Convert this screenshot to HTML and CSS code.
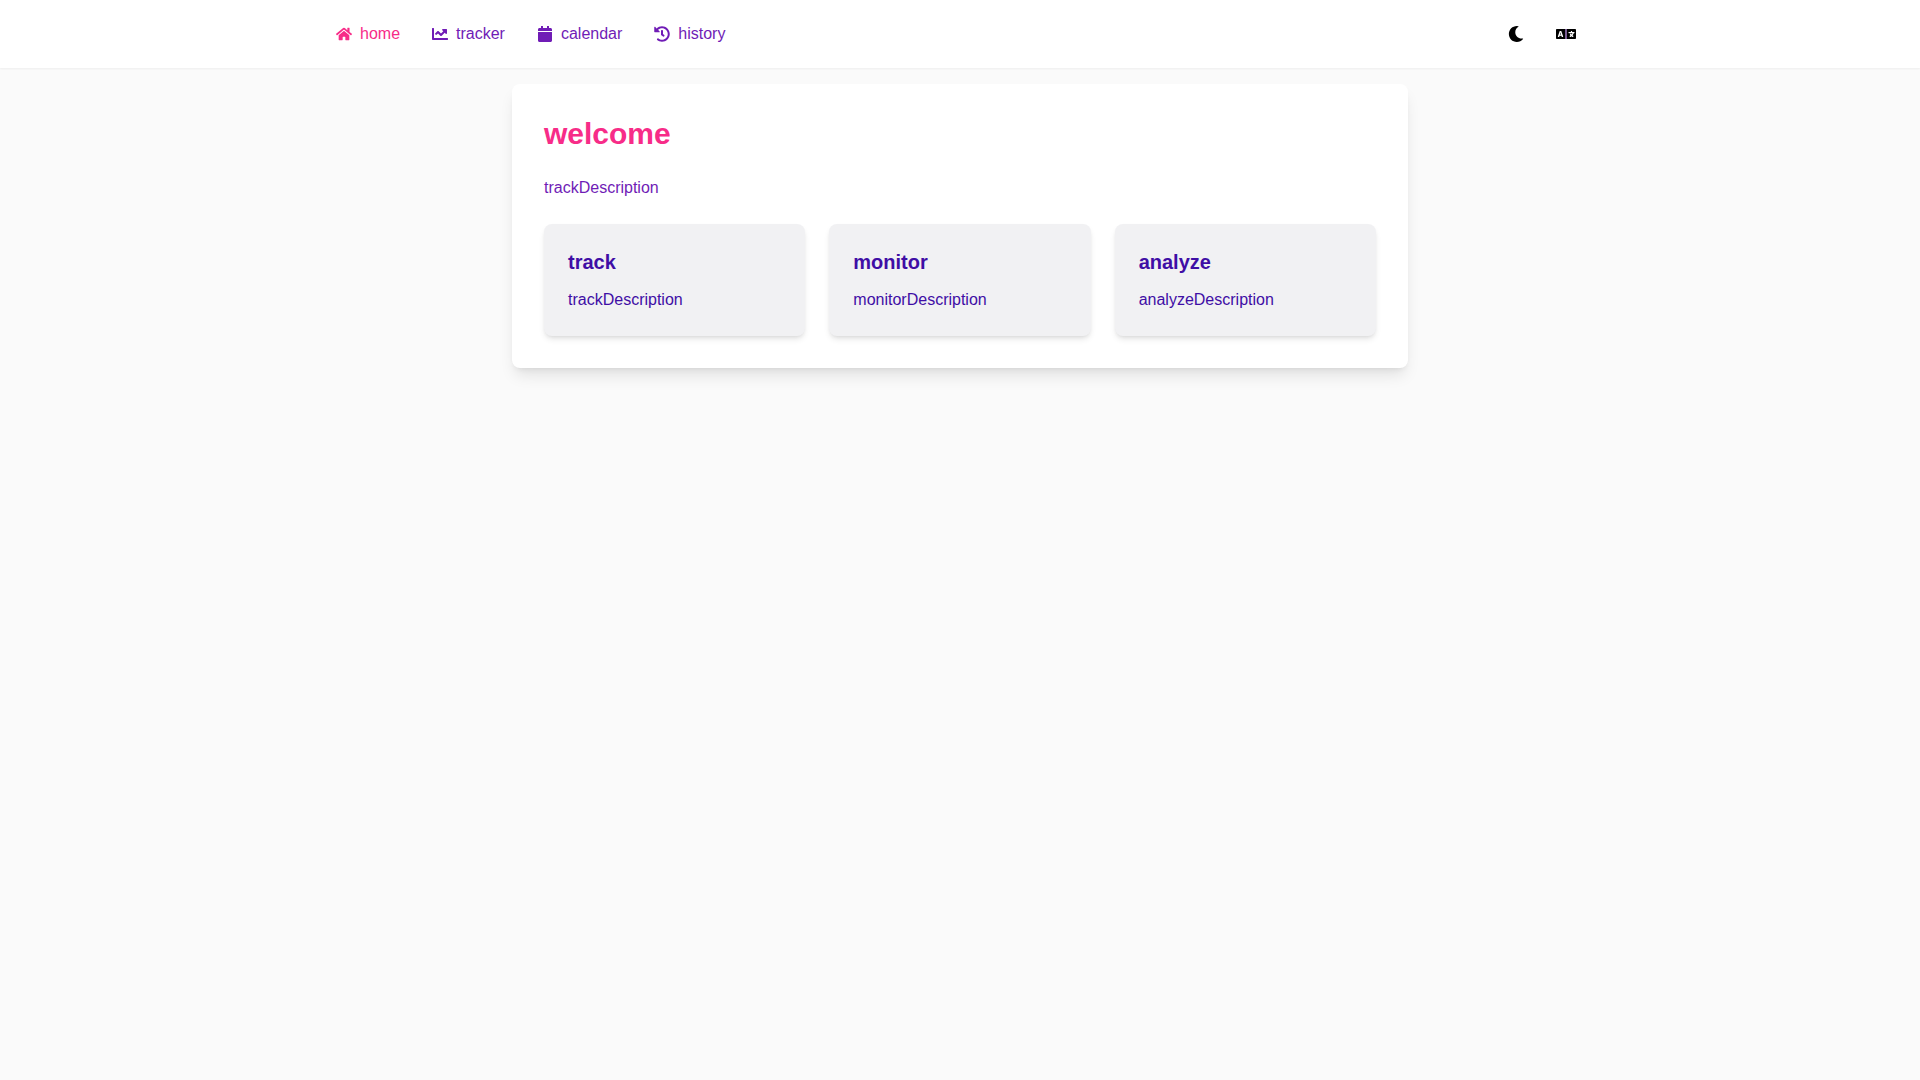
FILE: index.html
```html
<!DOCTYPE html>
<html lang="en">
<head>
  <meta charset="utf-8">
  <meta name="viewport" content="width=device-width, initial-scale=1">
  <title>welcome</title>
  <link rel="stylesheet" href="styles.css">
</head>
<body>
  <header class="site-header">
    <div class="header-inner">
      <nav class="nav">
        <a class="nav-link nav-link-active" href="#home">
          <svg class="icon" viewBox="0 0 576 512" aria-hidden="true"><path d="M280.37 148.26L96 300.11V464a16 16 0 0 0 16 16l112.06-.29a16 16 0 0 0 15.92-16V368a16 16 0 0 1 16-16h64a16 16 0 0 1 16 16v95.64a16 16 0 0 0 16 16.05L464 480a16 16 0 0 0 16-16V300L295.67 148.26a12.19 12.19 0 0 0-15.3 0zM571.6 251.47L488 182.56V44.05a12 12 0 0 0-12-12h-56a12 12 0 0 0-12 12v72.61L318.47 43a48 48 0 0 0-61 0L4.34 251.47a12 12 0 0 0-1.6 16.9l25.5 31A12 12 0 0 0 45.15 301l235.22-193.74a12.19 12.19 0 0 1 15.3 0L530.9 301a12 12 0 0 0 16.9-1.6l25.5-31a12 12 0 0 0-1.7-16.93z"/></svg>
          <span>home</span>
        </a>
        <a class="nav-link" href="#tracker">
          <svg class="icon" viewBox="0 0 512 512" aria-hidden="true"><path d="M496 384H64V80c0-8.84-7.16-16-16-16H16C7.16 64 0 71.16 0 80v336c0 17.67 14.33 32 32 32h464c8.84 0 16-7.16 16-16v-32c0-8.84-7.16-16-16-16zM464 96H345.94c-21.38 0-32.09 25.85-16.97 40.97l32.4 32.4L288 242.75l-73.37-73.37c-12.5-12.5-32.76-12.5-45.25 0l-68.69 68.69c-6.25 6.25-6.25 16.38 0 22.63l22.62 22.62c6.25 6.25 16.38 6.25 22.63 0L192 237.25l73.37 73.37c12.5 12.5 32.76 12.5 45.25 0l96-96 32.4 32.4c15.12 15.12 40.97 4.41 40.97-16.97V112c.01-8.84-7.15-16-15.99-16z"/></svg>
          <span>tracker</span>
        </a>
        <a class="nav-link" href="#calendar">
          <svg class="icon" viewBox="0 0 448 512" aria-hidden="true"><path d="M12 192h424c6.6 0 12 5.4 12 12v260c0 26.5-21.5 48-48 48H48c-26.5 0-48-21.5-48-48V204c0-6.6 5.4-12 12-12zm436-44v-36c0-26.5-21.5-48-48-48h-48V12c0-6.6-5.4-12-12-12h-40c-6.6 0-12 5.4-12 12v52H160V12c0-6.6-5.4-12-12-12h-40c-6.6 0-12 5.4-12 12v52H48C21.5 64 0 85.5 0 112v36c0 6.6 5.4 12 12 12h424c6.6 0 12-5.4 12-12z"/></svg>
          <span>calendar</span>
        </a>
        <a class="nav-link" href="#history">
          <svg class="icon" viewBox="0 0 512 512" aria-hidden="true"><path d="M504 255.531c.253 136.64-111.18 248.372-247.82 248.468-59.015.042-113.223-20.53-155.822-54.911-11.077-8.94-11.905-25.541-1.839-35.607l11.267-11.267c8.609-8.609 22.353-9.551 31.891-1.984C173.062 425.135 212.781 440 256 440c101.705 0 184-82.311 184-184 0-101.705-82.311-184-184-184-48.814 0-93.149 18.969-126.068 49.932l50.754 50.754c10.08 10.08 2.941 27.314-11.313 27.314H24c-8.837 0-16-7.163-16-16V38.627c0-14.254 17.234-21.393 27.314-11.314l49.372 49.372C129.209 34.136 189.552 8 256 8c136.81 0 247.747 110.78 248 247.531zm-180.912 78.784l9.823-12.63c8.138-10.463 6.253-25.542-4.21-33.679L288 256.349V152c0-13.255-10.745-24-24-24h-16c-13.255 0-24 10.745-24 24v135.651l65.409 50.874c10.463 8.137 25.541 6.253 33.679-4.21z"/></svg>
          <span>history</span>
        </a>
      </nav>
      <div class="actions">
        <button class="icon-button" type="button" aria-label="Toggle dark mode">
          <svg class="icon" viewBox="0 0 512 512" aria-hidden="true"><path d="M283.211 512c78.962 0 151.079-35.925 198.857-94.792 7.068-8.708-.639-21.43-11.562-19.35-124.203 23.654-238.262-71.576-238.262-196.954 0-72.222 38.662-138.635 101.498-174.394 9.686-5.512 7.25-20.197-3.756-22.23A258.156 258.156 0 0 0 283.211 0c-141.309 0-256 114.511-256 256 0 141.309 114.511 256 256 256z"/></svg>
        </button>
        <button class="icon-button" type="button" aria-label="Change language">
          <svg class="icon icon-large" viewBox="0 0 640 512" aria-hidden="true"><path d="M152.1 236.2c-3.5-12.1-7.8-33.2-7.8-33.2h-.5s-4.3 21.1-7.8 33.2l-11.1 37.5H163zM616 96H336v320h280c13.3 0 24-10.7 24-24V120c0-13.3-10.7-24-24-24zm-24 120c0 6.6-5.4 12-12 12h-11.4c-6.9 23.6-21.7 47.4-42.7 69.9 8.4 6.4 17.1 12.5 26.1 18 5.5 3.4 7.3 10.5 4.1 16.2l-7.9 13.9c-3.4 5.9-10.9 7.8-16.7 4.3-12.6-7.8-24.5-16.1-35.4-24.9-10.9 8.7-22.7 17.1-35.4 24.9-5.8 3.5-13.3 1.6-16.7-4.3l-7.9-13.9c-3.2-5.6-1.4-12.8 4.2-16.2 9.3-5.7 18-11.7 26.1-18-7.9-8.4-14.9-17-21-25.7-4-5.7-2.2-13.6 3.7-17.1l6.5-3.9 7.3-4.3c5.4-3.2 12.4-1.7 16 3.4 5 7 10.8 14 17.4 20.9 13.5-14.2 23.8-28.9 30-43.2H412c-6.6 0-12-5.4-12-12v-16c0-6.6 5.4-12 12-12h64v-16c0-6.6 5.4-12 12-12h16c6.6 0 12 5.4 12 12v16h64c6.6 0 12 5.4 12 12zM0 120v272c0 13.3 10.7 24 24 24h280V96H24c-13.3 0-24 10.7-24 24zm58.9 216.1L116.4 167c1.7-4.9 6.2-8.1 11.4-8.1h32.5c5.1 0 9.7 3.3 11.4 8.1l57.5 169.1c2.6 7.8-3.1 15.9-11.4 15.9h-22.9a12 12 0 0 1-11.5-8.6l-9.4-31.9h-60.2l-9.1 31.8c-1.5 5.1-6.2 8.7-11.5 8.7H70.3c-8.2 0-14-8.1-11.4-15.9z"/><path class="icon-divider" d="M304 96h32v320h-32z"/></svg>
        </button>
      </div>
    </div>
  </header>

  <main class="main">
    <section class="panel">
      <h1 class="panel-title">welcome</h1>
      <p class="panel-text">trackDescription</p>
      <div class="features">
        <article class="feature">
          <h2 class="feature-title">track</h2>
          <p class="feature-text">trackDescription</p>
        </article>
        <article class="feature">
          <h2 class="feature-title">monitor</h2>
          <p class="feature-text">monitorDescription</p>
        </article>
        <article class="feature">
          <h2 class="feature-title">analyze</h2>
          <p class="feature-text">analyzeDescription</p>
        </article>
      </div>
    </section>
  </main>
</body>
</html>
```

FILE: styles.css
```css
:root {
  --pink: #f72c88;
  --purple: #701cb6;
  --indigo: #3f0ea5;
  --page: #fafafa;
  --surface: #ffffff;
  --muted: #f1f1f3;
}

*,
*::before,
*::after {
  box-sizing: border-box;
}

body {
  margin: 0;
  min-height: 100vh;
  background: var(--page);
  color: var(--indigo);
  font-family: "Liberation Sans", Arial, sans-serif;
  font-size: 16px;
  line-height: 24px;
}

h1,
h2,
p {
  margin: 0;
}

.site-header {
  background: var(--surface);
  box-shadow: 0 1px 2px rgba(0, 0, 0, 0.05);
}

.header-inner {
  display: flex;
  align-items: center;
  justify-content: space-between;
  max-width: 1280px;
  margin: 0 auto;
  padding: 16px;
}

.nav {
  display: flex;
  flex-wrap: wrap;
  gap: 32px;
}

.nav-link {
  display: flex;
  align-items: center;
  gap: 8px;
  color: var(--purple);
  text-decoration: none;
}

.nav-link-active {
  color: var(--pink);
}

.icon {
  display: block;
  width: 16px;
  height: 16px;
  fill: currentColor;
}

.icon-large {
  width: 20px;
  height: 20px;
}

.icon-divider {
  fill: var(--purple);
  opacity: 0.7;
}

.actions {
  display: flex;
  align-items: center;
  gap: 16px;
}

.icon-button {
  padding: 8px;
  border: 0;
  border-radius: 8px;
  background: transparent;
  color: #000000;
  cursor: pointer;
}

.main {
  padding: 16px;
}

.panel {
  max-width: 896px;
  margin: 0 auto;
  padding: 32px;
  border-radius: 8px;
  background: var(--surface);
  box-shadow: 0 10px 15px -3px rgba(0, 0, 0, 0.1), 0 4px 6px -4px rgba(0, 0, 0, 0.1);
}

.panel-title {
  margin-bottom: 24px;
  color: var(--pink);
  font-size: 30px;
  line-height: 36px;
}

.panel-text {
  margin-bottom: 24px;
  color: var(--purple);
}

.features {
  display: grid;
  grid-template-columns: repeat(auto-fit, minmax(240px, 1fr));
  gap: 24px;
}

.feature {
  padding: 24px;
  border-radius: 8px;
  background: var(--muted);
  box-shadow: 0 4px 6px -1px rgba(0, 0, 0, 0.1), 0 2px 4px -2px rgba(0, 0, 0, 0.1);
}

.feature-title {
  margin-bottom: 12px;
  font-size: 20px;
  line-height: 28px;
}
```
